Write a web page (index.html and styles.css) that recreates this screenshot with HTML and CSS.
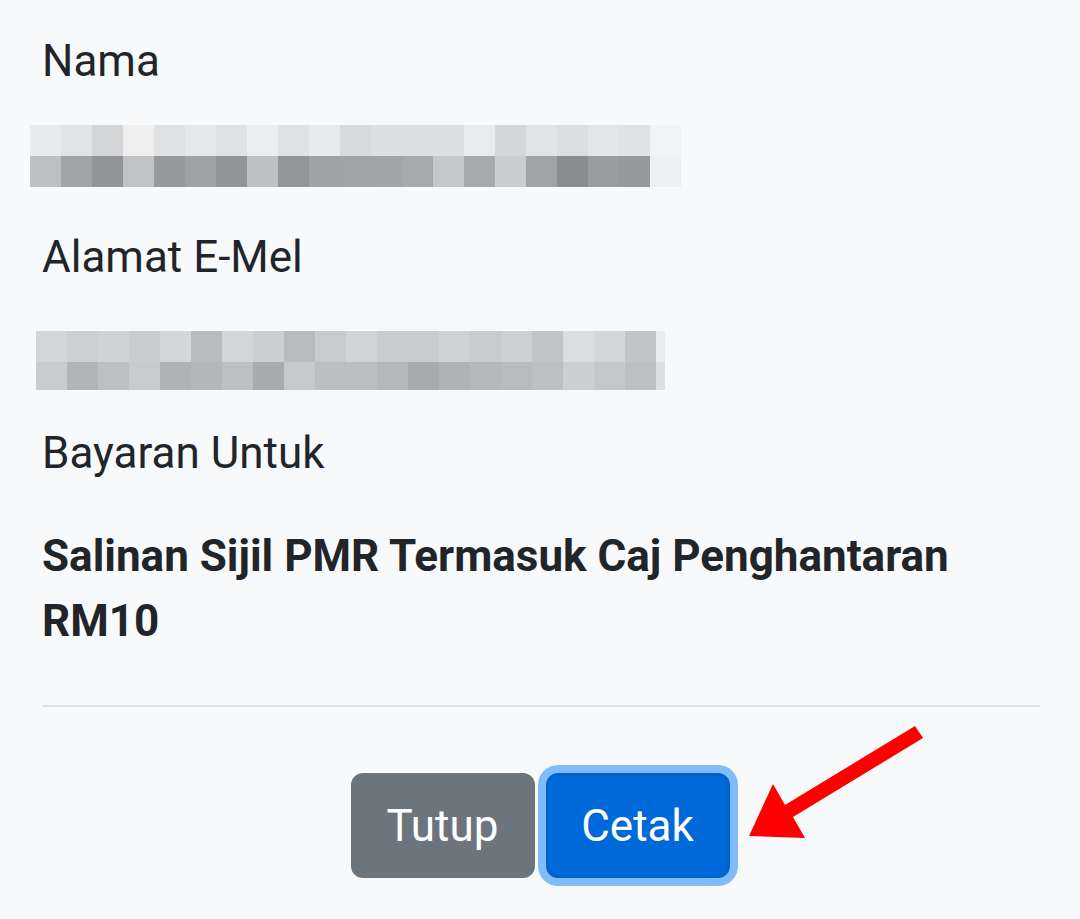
FILE: index.html
```html
<!DOCTYPE html>
<html lang="ms">
<head>
<meta charset="utf-8">
<title>Bayaran</title>
<link rel="stylesheet" href="styles.css">
</head>
<body>
<main class="modal-body">
  <div class="label first">Nama</div>
  <div class="blur blur-name">
    <div class="row">
      <span style="background:#e9eaec"></span><span style="background:#e2e3e5"></span><span style="background:#d4d5d7"></span><span style="background:#efeff0"></span><span style="background:#e0e1e3"></span><span style="background:#e7e8e9"></span><span style="background:#e1e2e3"></span><span style="background:#ecedee"></span><span style="background:#e0e1e3"></span><span style="background:#e8e9eb"></span><span style="background:#d9dadd"></span><span style="background:#dedfe0"></span><span style="background:#dddedf"></span><span style="background:#dddee0"></span><span style="background:#eaebed"></span><span style="background:#d5d6d8"></span><span style="background:#e2e3e5"></span><span style="background:#dcdddf"></span><span style="background:#e4e5e7"></span><span style="background:#e1e2e4"></span><span style="background:#f2f3f4"></span>
    </div>
    <div class="row">
      <span style="background:#bebfc2"></span><span style="background:#a2a3a6"></span><span style="background:#939497"></span><span style="background:#c1c2c5"></span><span style="background:#98999c"></span><span style="background:#a1a2a5"></span><span style="background:#939497"></span><span style="background:#bfc0c3"></span><span style="background:#949598"></span><span style="background:#a1a2a5"></span><span style="background:#a2a3a6"></span><span style="background:#a3a4a7"></span><span style="background:#a8a9ac"></span><span style="background:#c6c7c9"></span><span style="background:#a8a9ac"></span><span style="background:#cccdd0"></span><span style="background:#a2a3a6"></span><span style="background:#8b8c90"></span><span style="background:#9b9c9f"></span><span style="background:#98999c"></span><span style="background:#eeeff1"></span>
    </div>
  </div>

  <div class="label second">Alamat E-Mel</div>
  <div class="blur blur-mail">
    <div class="row">
      <span style="background:#d4d5d7"></span><span style="background:#cecfd2"></span><span style="background:#d1d2d4"></span><span style="background:#cbcccf"></span><span style="background:#d5d6d7"></span><span style="background:#b9babd"></span><span style="background:#d4d5d7"></span><span style="background:#cdced1"></span><span style="background:#b9babd"></span><span style="background:#c9cacc"></span><span style="background:#d2d3d6"></span><span style="background:#cacbcd"></span><span style="background:#cacbcd"></span><span style="background:#d0d1d3"></span><span style="background:#cacbce"></span><span style="background:#cfd0d3"></span><span style="background:#c2c3c5"></span><span style="background:#dcdddf"></span><span style="background:#d5d6d8"></span><span style="background:#c3c4c7"></span><span class="part" style="background:#ebecee"></span>
    </div>
    <div class="row">
      <span style="background:#cacbcd"></span><span style="background:#b3b4b7"></span><span style="background:#bebfc2"></span><span style="background:#c9cacc"></span><span style="background:#b1b2b5"></span><span style="background:#b5b6b9"></span><span style="background:#bebfc2"></span><span style="background:#aaabae"></span><span style="background:#c8c9cc"></span><span style="background:#bdbec1"></span><span style="background:#bdbec1"></span><span style="background:#b6b7ba"></span><span style="background:#a9aaad"></span><span style="background:#b1b2b5"></span><span style="background:#b6b7ba"></span><span style="background:#b9babd"></span><span style="background:#bebfc2"></span><span style="background:#cdced0"></span><span style="background:#c6c7ca"></span><span style="background:#bebfc2"></span><span class="part" style="background:#dddee0"></span>
    </div>
  </div>

  <div class="label third">Bayaran Untuk</div>
  <p class="item">Salinan Sijil PMR Termasuk Caj Penghantaran RM10</p>
</main>
<footer class="modal-footer">
  <button class="btn btn-secondary" type="button">Tutup</button>
  <button class="btn btn-primary" type="button">Cetak</button>
  <svg class="arrow" width="200" height="130" viewBox="0 0 200 130" aria-hidden="true">
    <polygon points="175,6 183,18 53,97 65,118 9,116 33,64 45,85" fill="#ff0000"/>
  </svg>
</footer>
</body>
</html>
```

FILE: styles.css
```css
* { box-sizing: border-box; }

html, body {
  margin: 0;
  padding: 0;
  background: #f8f9fa;
  width: 1080px;
  height: 919px;
  overflow: hidden;
}

body {
  font-family: Roboto, "Liberation Sans", sans-serif;
  color: #212529;
  font-size: 44px;
}

.modal-body {
  padding: 28px 40px 0 42px;
}

.label {
  font-size: 44px;
  line-height: 66px;
  font-weight: 400;
}

.second { margin-top: 37px; }
.third { margin-top: 30px; }

.blur {
  display: flex;
  flex-direction: column;
}

.blur .row {
  display: flex;
}

.blur-name {
  margin-top: 31px;
  margin-left: -12px;
}
.blur-name .row { height: 31px; }
.blur-name .row span { width: 31px; height: 100%; }

.blur-mail {
  margin-top: 41px;
  margin-left: -6px;
}
.blur-mail .row:first-child { height: 31px; }
.blur-mail .row:last-child { height: 28px; }
.blur-mail .row span { width: 31px; height: 100%; }
.blur-mail .row span.part { width: 9px; }

.item {
  margin: 38px 0 0;
  font-weight: 700;
  line-height: 65px;
  font-size: 44px;
}

.modal-footer {
  position: relative;
  margin: 51px 40px 0 42px;
  border-top: 2px solid #dee2e6;
  padding-top: 66px;
  display: flex;
  justify-content: center;
  gap: 11px;
}

.btn {
  font-family: Roboto, "Liberation Sans", sans-serif;
  font-size: 44px;
  line-height: 66px;
  height: 105px;
  padding: 0;
  border: 3px solid transparent;
  border-radius: 12px;
  color: #fff;
  cursor: pointer;
}

.btn-secondary {
  background: #6c757d;
  border-color: #6c757d;
  width: 184px;
  margin-left: -2px;
}

.btn-primary {
  background: #0069d9;
  border-color: #0062cc;
  width: 184px;
  box-shadow: 0 0 0 8px #80bbfa;
}

.arrow {
  position: absolute;
  left: 698px;
  top: 13px;
}
```
